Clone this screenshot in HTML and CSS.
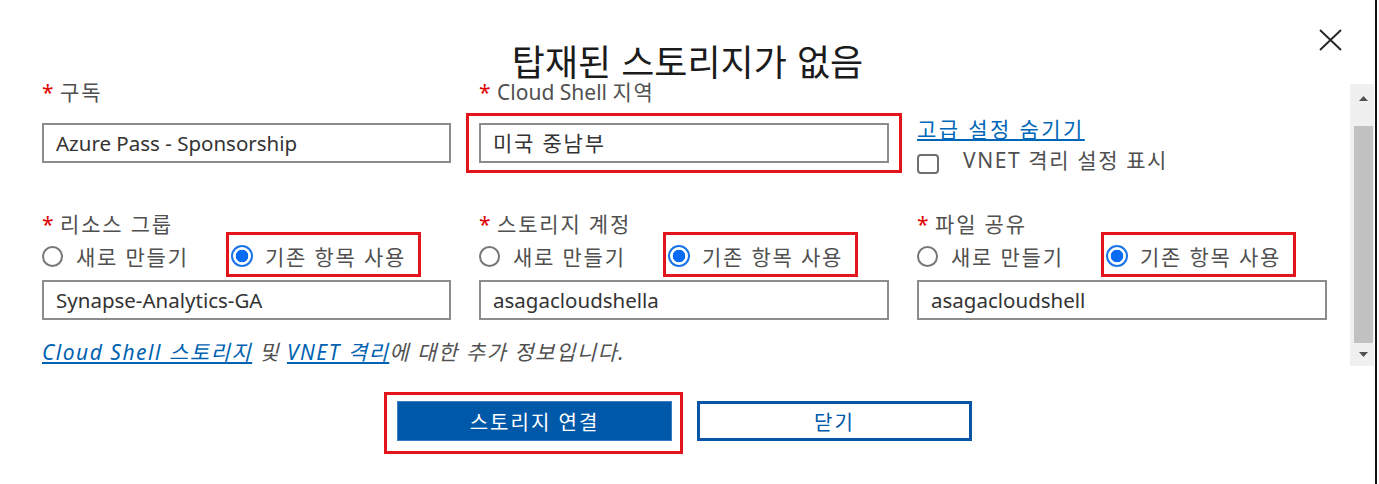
FILE: index.html
```html
<!DOCTYPE html>
<html lang="ko">
<head>
<meta charset="utf-8">
<title>탑재된 스토리지가 없음</title>
<link rel="stylesheet" href="styles.css">
</head>
<body>
<div class="dialog">
  <header class="header">
    <h1 class="title">탑재된 스토리지가 없음</h1>
    <button class="close" aria-label="닫기">
      <svg width="23" height="22" viewBox="0 0 23 22"><path d="M1 1 L22 21 M22 1 L1 21" stroke="#222" stroke-width="1.8" fill="none"/></svg>
    </button>
  </header>
  <div class="body">
    <div class="form">
      <div class="grid">
        <div class="field">
          <label class="field-label"><span class="req">*</span> <span class="k">구독</span></label>
          <div class="input">Azure Pass - Sponsorship</div>
        </div>
        <div class="field">
          <label class="field-label"><span class="req">*</span> Cloud Shell <span class="k">지역</span></label>
          <div class="input annot region"><span class="k">미국 중남부</span></div>
        </div>
        <div class="field advanced">
          <a class="link k" href="#">고급 설정 숨기기</a>
          <div class="check-row"><span class="checkbox"></span><span class="check-text">VNET 격리 설정 표시</span></div>
        </div>

        <div class="field">
          <label class="field-label"><span class="req">*</span> <span class="k">리소스 그룹</span></label>
          <div class="radio-row">
            <span class="option first"><span class="radio"></span><span class="k">새로 만들기</span></span>
            <span class="option annot picked"><span class="radio checked"></span><span class="k">기존 항목 사용</span></span>
          </div>
          <div class="input small-gap">Synapse-Analytics-GA</div>
        </div>
        <div class="field">
          <label class="field-label"><span class="req">*</span> <span class="k">스토리지 계정</span></label>
          <div class="radio-row">
            <span class="option first"><span class="radio"></span><span class="k">새로 만들기</span></span>
            <span class="option annot picked"><span class="radio checked"></span><span class="k">기존 항목 사용</span></span>
          </div>
          <div class="input small-gap">asagacloudshella</div>
        </div>
        <div class="field">
          <label class="field-label"><span class="req">*</span> <span class="k">파일 공유</span></label>
          <div class="radio-row">
            <span class="option first"><span class="radio"></span><span class="k">새로 만들기</span></span>
            <span class="option annot picked"><span class="radio checked"></span><span class="k">기존 항목 사용</span></span>
          </div>
          <div class="input small-gap">asagacloudshell</div>
        </div>
      </div>
      <p class="info"><a href="#">Cloud Shell 스토리지</a> 및 <a href="#">VNET 격리</a>에 대한 추가 정보입니다.</p>
    </div>
    <div class="scrollbar">
      <div class="sb-btn"><svg width="9" height="5" viewBox="0 0 9 5"><polygon points="0,5 9,5 4.5,0" fill="#505050"/></svg></div>
      <div class="sb-thumb"></div>
      <div class="sb-btn down"><svg width="9" height="5" viewBox="0 0 9 5"><polygon points="0,0 9,0 4.5,5" fill="#505050"/></svg></div>
    </div>
  </div>
  <div class="actions">
    <span class="annot primary-wrap"><button class="btn btn-primary">스토리지 연결</button></span>
    <button class="btn btn-secondary">닫기</button>
  </div>
</div>
</body>
</html>
```
FILE: styles.css
```css
* { box-sizing: border-box; }
html, body { margin: 0; }
body {
  font-family: "Noto Sans", "Noto Sans CJK KR", sans-serif;
  color: #505050;
  background: #fff;
}
.k { letter-spacing: 1.8px; }
.dialog {
  width: 1377px;
  height: 484px;
  border-right: 2px solid #111;
  display: flex;
  flex-direction: column;
}
.header {
  height: 80px;
  display: grid;
  grid-template-columns: 1fr auto 1fr;
}
.title {
  grid-column: 2;
  margin: 43px 0 0;
  font-family: "Noto Sans CJK KR", sans-serif;
  font-size: 36px;
  font-weight: 400;
  line-height: 34px;
  height: 34px;
  color: #1b1b1b;
  white-space: nowrap;
}
.close {
  grid-column: 3;
  justify-self: end;
  align-self: start;
  margin: 29px 33px 0 0;
  width: 23px;
  height: 22px;
  padding: 0;
  border: 0;
  background: none;
  display: flex;
}
.body {
  display: flex;
  height: 286px;
}
.form {
  flex: 1;
  padding-left: 42px;
}
.grid {
  display: grid;
  grid-template-columns: 409px 410px 410px;
  grid-template-rows: 83px 108px;
  column-gap: 28px;
  row-gap: 49px;
}
.field-label {
  display: block;
  height: 24px;
  line-height: 24px;
  font-size: 21px;
  white-space: nowrap;
}
.req { color: #e00000; margin-right: 1px; }
.input {
  margin-top: 19px;
  height: 40px;
  border: 2px solid #8c8c8c;
  padding: 0 12px;
  font-size: 20.5px;
  line-height: 36px;
  color: #333;
  white-space: nowrap;
}
.input .k { font-size: 21px; }
.input.small-gap { margin-top: 4px; }
.radio-row {
  height: 40px;
  display: flex;
  align-items: center;
}
.option {
  display: flex;
  align-items: center;
  gap: 13px;
  font-size: 21px;
  white-space: nowrap;
  height: 40px;
}
.option.first { width: 189px; }
.option.picked { gap: 12px; }
.radio {
  width: 21px;
  height: 21px;
  border-radius: 50%;
  border: 2px solid #777;
  flex: none;
}
.radio.checked {
  width: 22px;
  height: 22px;
  border-color: #1a74e8;
  background: radial-gradient(circle, #0a6cf5 0 6px, #fff 6.6px);
}
.annot { position: relative; }
.annot::after {
  content: "";
  position: absolute;
  border: 3px solid #e3141b;
  pointer-events: none;
}
.region::after { top: -12px; bottom: -12px; left: -15px; right: -15px; }
.picked::after { top: -4px; bottom: -1px; left: -5px; right: -15px; }
.primary-wrap { display: flex; }
.primary-wrap::after { top: -9px; bottom: -13px; left: -13px; right: -11px; }

.link {
  display: block;
  width: max-content;
  margin-top: 37px;
  color: #0067b8;
  font-size: 21px;
  line-height: 24px;
  letter-spacing: 2.4px;
  text-decoration: underline;
}
.check-row {
  display: flex;
  align-items: center;
  gap: 24px;
  margin-top: 8px;
  height: 24px;
  font-size: 21px;
}
.check-text { letter-spacing: 1.6px; margin-top: -4px; }
.checkbox {
  width: 22px;
  height: 20px;
  border: 2px solid #707070;
  border-radius: 4px;
  margin-top: 6px;
  flex: none;
}
.info {
  margin: 20px 0 0;
  font-size: 21px;
  line-height: 24px;
  letter-spacing: 1.5px;
  font-style: italic;
  color: #505050;
  white-space: nowrap;
}
.info a { color: #0063b1; text-decoration: underline; }

.scrollbar {
  width: 24px;
  height: 282px;
  margin: 4px 1px 0 0;
  background: #f0f0f0;
  display: flex;
  flex-direction: column;
}
.sb-btn {
  height: 28px;
  display: flex;
  align-items: center;
  justify-content: center;
  padding-left: 3px;
}
.sb-btn.down { height: 23px; }
.sb-thumb {
  flex: 1;
  margin: 14px 1px 0 4px;
  background: #c1c1c1;
}
.actions {
  display: flex;
  justify-content: center;
  gap: 25px;
  margin-top: 35px;
  padding-right: 6px;
}
.btn {
  width: 275px;
  height: 40px;
  font-family: "Noto Sans", "Noto Sans CJK KR", sans-serif;
  font-size: 20px;
  letter-spacing: 2px;
  cursor: pointer;
}
.btn-primary {
  background: #0058a8;
  color: #fff;
  border: 1px solid #3a7cc2;
}
.btn-secondary {
  background: #fff;
  color: #0058a8;
  border: 3px solid #0a56a6;
}
```
